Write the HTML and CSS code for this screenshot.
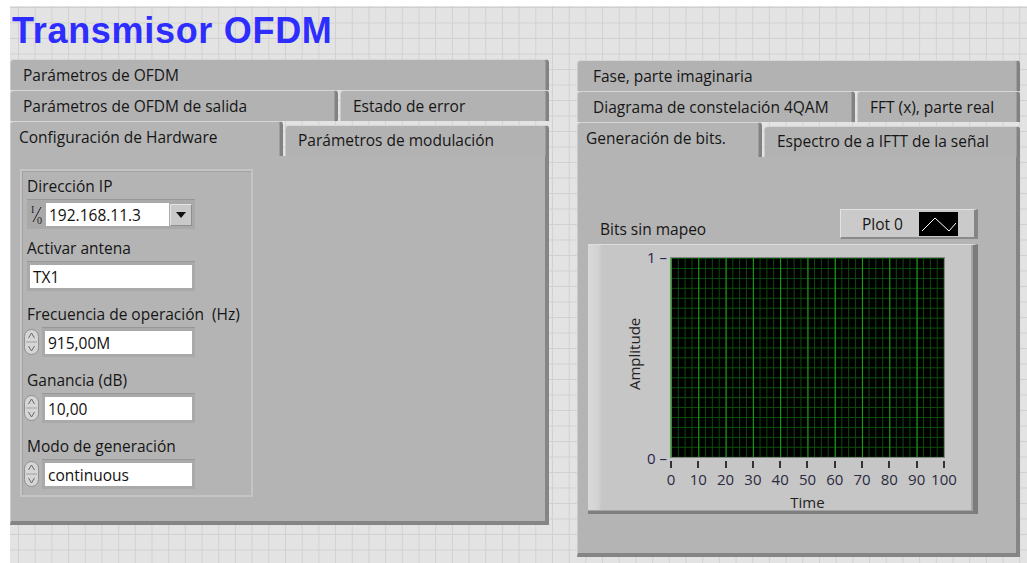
FILE: index.html
```html
<!DOCTYPE html>
<html lang="es">
  <head>
    <meta charset="UTF-8" />
    <meta name="viewport" content="width=device-width, initial-scale=1.0" />
    <title>Transmisor OFDM</title>

    <link rel="stylesheet" href="styles.css">
  </head>
  <body>
    <div class="front">
      <h1 class="title">Transmisor OFDM</h1>

      <div class="panels">
        <!-- left tab control -->
        <section class="tabctl tabctl-left">
          <div class="tabrow">
            <div class="tab">Parámetros de OFDM</div>
          </div>
          <div class="tabrow">
            <div class="tab w-salida">Parámetros de OFDM de salida</div>
            <div class="tab">Estado de error</div>
          </div>
          <div class="tabrow tabrow-front">
            <div class="tab tab-active w-hw">Configuración de Hardware</div>
            <div class="tab">Parámetros de modulación</div>
          </div>

          <div class="page page-left">
            <div class="cluster">
              <div class="item item-first">
                <div class="lbl">Dirección IP</div>
                <div class="ctl">
                  <svg class="io" width="15" height="22" viewBox="0 0 15 22">
                    <text x="1" y="9" font-family="Liberation Serif, serif" font-size="10">I</text>
                    <line x1="11" y1="3" x2="3" y2="18" stroke="#222" stroke-width="1"/>
                    <text x="7" y="20" font-family="Liberation Serif, serif" font-size="10">0</text>
                  </svg>
                  <div class="field">192.168.11.3</div>
                  <div class="dd">
                    <svg width="10" height="6" viewBox="0 0 10 6"><polygon points="0,0 10,0 5,6" fill="#111"/></svg>
                  </div>
                </div>
              </div>

              <div class="item">
                <div class="lbl">Activar antena</div>
                <div class="ctl">
                  <div class="field">TX1</div>
                </div>
              </div>

              <div class="item">
                <div class="lbl">Frecuencia de operación&nbsp; (Hz)</div>
                <div class="numrow">
                  <svg class="spin" width="18" height="28" viewBox="0 0 18 28">
                    <rect x="1.5" y="1.5" width="14" height="25" rx="7" fill="#d6d6d6" stroke="#8f8f8f"/>
                    <line x1="3" y1="14" x2="14" y2="14" stroke="#a0a0a0"/>
                    <polyline points="5.5,10 8.5,5 11.5,10" fill="none" stroke="#666"/>
                    <polyline points="5.5,18 8.5,23 11.5,18" fill="none" stroke="#666"/>
                  </svg>
                  <div class="ctl ctl-num">
                    <div class="field">915,00M</div>
                  </div>
                </div>
              </div>

              <div class="item">
                <div class="lbl">Ganancia (dB)</div>
                <div class="numrow">
                  <svg class="spin" width="18" height="28" viewBox="0 0 18 28">
                    <rect x="1.5" y="1.5" width="14" height="25" rx="7" fill="#d6d6d6" stroke="#8f8f8f"/>
                    <line x1="3" y1="14" x2="14" y2="14" stroke="#a0a0a0"/>
                    <polyline points="5.5,10 8.5,5 11.5,10" fill="none" stroke="#666"/>
                    <polyline points="5.5,18 8.5,23 11.5,18" fill="none" stroke="#666"/>
                  </svg>
                  <div class="ctl ctl-num">
                    <div class="field">10,00</div>
                  </div>
                </div>
              </div>

              <div class="item">
                <div class="lbl">Modo de generación</div>
                <div class="numrow">
                  <svg class="spin" width="18" height="28" viewBox="0 0 18 28">
                    <rect x="1.5" y="1.5" width="14" height="25" rx="7" fill="#d6d6d6" stroke="#8f8f8f"/>
                    <line x1="3" y1="14" x2="14" y2="14" stroke="#a0a0a0"/>
                    <polyline points="5.5,10 8.5,5 11.5,10" fill="none" stroke="#666"/>
                    <polyline points="5.5,18 8.5,23 11.5,18" fill="none" stroke="#666"/>
                  </svg>
                  <div class="ctl ctl-num">
                    <div class="field">continuous</div>
                  </div>
                </div>
              </div>
            </div>
          </div>
        </section>

        <!-- right tab control -->
        <section class="tabctl tabctl-right">
          <div class="tabrow">
            <div class="tab tab-r">Fase, parte imaginaria</div>
          </div>
          <div class="tabrow">
            <div class="tab tab-r w-diag">Diagrama de constelación 4QAM</div>
            <div class="tab">FFT (x), parte real</div>
          </div>
          <div class="tabrow tabrow-front">
            <div class="tab tab-active w-bits">Generación de bits.</div>
            <div class="tab">Espectro de a IFTT de la señal</div>
          </div>

          <div class="page page-right">
            <div class="graph-head">
              <span class="graph-name">Bits sin mapeo</span>
              <div class="legend">
                <span>Plot 0</span>
                <svg class="swatch" width="39" height="24" viewBox="0 0 39 24">
                  <rect width="39" height="24" fill="#000"/>
                  <polyline points="3,19 16,6 30,19 37,11" fill="none" stroke="#fff" stroke-width="1"/>
                </svg>
              </div>
            </div>

            <div class="graph">
              <div class="yaxis">
                <div class="ytitle">Amplitude</div>
                <div class="yticks">
                  <span>1 &#8211;</span>
                  <span>0 &#8211;</span>
                </div>
              </div>
              <div class="plot"></div>
              <div></div>
              <div class="xaxis">
                <div class="xticks">
                  <div class="xt"><i></i><span>0</span></div>
                  <div class="xt"><i></i><span>10</span></div>
                  <div class="xt"><i></i><span>20</span></div>
                  <div class="xt"><i></i><span>30</span></div>
                  <div class="xt"><i></i><span>40</span></div>
                  <div class="xt"><i></i><span>50</span></div>
                  <div class="xt"><i></i><span>60</span></div>
                  <div class="xt"><i></i><span>70</span></div>
                  <div class="xt"><i></i><span>80</span></div>
                  <div class="xt"><i></i><span>90</span></div>
                  <div class="xt"><i></i><span>100</span></div>
                </div>
                <div class="xtitle">Time</div>
              </div>
            </div>
          </div>
        </section>
      </div>
    </div>
  </body>
</html>
```

FILE: styles.css
```css
* {
  box-sizing: border-box;
}

body {
  margin: 0;
  background: #fff;
  font-family: "Open Sans", "Noto Sans", sans-serif;
  font-size: 15.5px;
  color: #161616;
  overflow: hidden;
}

.front {
  margin: 6px 0 0 10px;
  height: 557px;
  background-color: #e3e3e3;
  background-image: linear-gradient(to right, #d1d1d1 1px, transparent 1px),
    linear-gradient(to bottom, #d1d1d1 1px, transparent 1px);
  background-size: 16.7px 15.5px;
  background-position: 8px 1px;
}

.title {
  margin: 0;
  height: 53px;
  padding: 5px 0 0 2px;
  font-family: "Liberation Sans", Arial, sans-serif;
  font-weight: bold;
  font-size: 36px;
  letter-spacing: 0.7px;
  line-height: 40px;
  color: #2d2dff;
}

.panels {
  display: flex;
  align-items: flex-start;
}

/* tab controls */

.tabctl {
  display: flex;
  flex-direction: column;
}

.tabctl-left {
  width: 539px;
}

.tabctl-right {
  width: 443px;
  margin-left: 28px;
  margin-top: 1px;
}

.tabrow {
  display: flex;
  height: 31px;
}

.tabrow-front {
  height: 35px;
  align-items: flex-end;
}

.tab {
  flex: 1;
  height: 100%;
  display: flex;
  align-items: center;
  padding-left: 12px;
  background: #b2b2b2;
  border-top: 1px solid #d7d7d7;
  border-left: 1px solid #cbcbcb;
  border-right: 3px solid #828282;
  border-radius: 4px 4px 0 0;
  box-shadow: inset -1px 0 #9d9d9d;
  white-space: nowrap;
}

.tab + .tab {
  margin-left: 2px;
}

.tab-r {
  padding-left: 15px;
}

.tabrow-front .tab {
  height: 31px;
  padding-bottom: 2px;
}

.tabrow-front .tab-active {
  height: 35px;
  align-items: flex-start;
  padding: 4px 0 0 8px;
  background: #b4b4b4;
  flex: none;
}

.w-salida { flex: none; width: 328px; }
.w-hw { width: 273px; }
.w-diag { flex: none; width: 278px; }
.w-bits { width: 185px; }

.page {
  background: #b4b4b4;
  border-left: 1px solid #cbcbcb;
  border-right: 4px solid #858585;
  border-bottom: 4px solid #858585;
}

.page-left {
  height: 369px;
  padding: 13px 0 0 9px;
}

.page-right {
  height: 400px;
  padding: 52px 0 0 10px;
}

/* hardware cluster */

.cluster {
  width: 233px;
  height: 328px;
  padding: 4px 0 0 5px;
  border: 2px solid #c4c4c4;
  box-shadow: inset 1px 1px #a2a2a2;
  display: flex;
  flex-direction: column;
  gap: 12px;
}

.item-first {
  margin-bottom: -4px;
}

.lbl {
  height: 24px;
  line-height: 22px;
  white-space: nowrap;
}

.ctl {
  display: flex;
  align-items: center;
  width: 168px;
  height: 30px;
  padding: 3px;
  background: #a9a9a9;
  border-top: 1px solid #979797;
}

.field {
  flex: 1;
  height: 100%;
  background: #fff;
  padding-left: 3px;
  line-height: 24px;
  color: #111;
}

.io {
  flex: none;
  margin-right: 1px;
}

.io text {
  fill: #222;
}

.dd {
  flex: none;
  width: 22px;
  height: 22px;
  margin-left: 1px;
  display: flex;
  align-items: center;
  justify-content: center;
  background: #c9c9c9;
  border: 1px solid #8e8e8e;
  border-top-color: #e4e4e4;
  border-left-color: #e4e4e4;
}

.numrow {
  display: flex;
  align-items: center;
  margin-left: -4px;
}

.spin {
  flex: none;
  margin-right: 1px;
}

.ctl-num {
  width: 153px;
}

/* graph */

.graph-head {
  width: 390px;
  height: 30px;
  display: flex;
  justify-content: space-between;
  align-items: flex-end;
}

.graph-name {
  padding-left: 12px;
  line-height: 22px;
  margin-bottom: -1px;
}

.legend {
  width: 138px;
  height: 30px;
  display: flex;
  align-items: center;
  justify-content: space-between;
  padding: 0 16px 0 21px;
  background: #cacaca;
  border-top: 1px solid #e2e2e2;
  border-left: 1px solid #e2e2e2;
  border-right: 4px solid #858585;
  border-bottom: 2px solid #8a8a8a;
}

.swatch {
  display: block;
}

.graph {
  margin-top: 5px;
  width: 390px;
  height: 270px;
  display: grid;
  grid-template-columns: 82px 275px;
  grid-template-rows: 201px auto;
  padding-top: 12px;
  background: linear-gradient(to right, #d9d9d9 0, #d2d2d2 10px, #c6c6c6 14px);
  border-top: 1px solid #dedede;
  border-right: 5px solid #7c7c7c;
  border-bottom: 3px solid #7f7f7f;
  box-shadow: inset -2px -1px #a4a4a4;
}

.yaxis {
  display: flex;
}

.ytitle {
  flex: 1;
  display: flex;
  align-items: center;
  justify-content: center;
  writing-mode: vertical-rl;
  transform: rotate(180deg);
  padding-top: 8px;
  padding-right: 32px;
  color: #222;
  font-size: 15px;
}

.yticks {
  flex: none;
  display: flex;
  flex-direction: column;
  justify-content: space-between;
  align-items: flex-end;
  margin: -11px 0;
  padding-right: 3px;
  line-height: 22px;
  white-space: nowrap;
  font-size: 15px;
  color: #2b2450;
}

.plot {
  width: 275px;
  height: 201px;
  background-color: #000;
  background-image: linear-gradient(to right, #17a317 1px, transparent 1px),
    linear-gradient(to right, #0b4d0b 1px, transparent 1px),
    linear-gradient(to bottom, #0b4d0b 1px, transparent 1px);
  background-size: 27.3px 100%, 6.825px 100%, 100% 9.95px;
  border: 1px solid #858585;
}

.xaxis {
  width: 275px;
}

.xticks {
  display: flex;
  justify-content: space-between;
  padding: 0 1px;
}

.xt {
  width: 0;
  display: flex;
  flex-direction: column;
  align-items: center;
  color: #2b2a40;
}

.xt i {
  display: block;
  width: 2px;
  height: 7px;
  margin-top: 3px;
  background: #333;
}

.xt span {
  line-height: 22px;
  white-space: nowrap;
  font-size: 15px;
}

.xtitle {
  text-align: center;
  line-height: 24px;
  font-size: 15px;
  color: #222;
}
```
